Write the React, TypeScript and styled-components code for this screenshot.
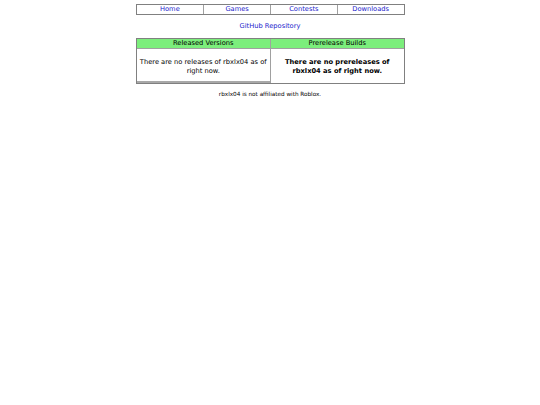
import React from 'react'
import styled, { createGlobalStyle } from 'styled-components'

const GlobalStyle = createGlobalStyle`
  body {
    margin: 4px 0 0 0;
    background: #fff;
    font-family: 'DejaVu Sans', Verdana, sans-serif;
    font-size: 6.7px;
    color: #000;
  }
`

const Page = styled.div`
  display: flex;
  flex-direction: column;
  align-items: center;
`

const Table = styled.table`
  width: 269px;
  border: 1px solid #808080;
  border-collapse: separate;
  border-spacing: 0;
  table-layout: fixed;
`

const NavCell = styled.td`
  border-left: 1px solid #a0a0a0;
  text-align: center;
  padding: 0;
  height: 9px;
  line-height: 9px;
  &:first-child {
    border-left: none;
  }
`

const Link = styled.a`
  color: #2222cc;
  text-decoration: none;
`

const RepoLink = styled(Link)`
  margin-top: 7px;
  line-height: 9px;
`

const MainTable = styled(Table)`
  margin-top: 7px;
`

const HeadCell = styled.th`
  background: #7cee7c;
  font-weight: normal;
  height: 9px;
  line-height: 9px;
  padding: 0;
  border-bottom: 1px solid #a0a0a0;
  & + & {
    border-left: 1px solid #a0a0a0;
  }
`

const BodyCell = styled.td<{ $bold?: boolean }>`
  vertical-align: top;
  text-align: center;
  padding: 0;
  font-weight: ${p => (p.$bold ? 'bold' : 'normal')};
  & + & {
    border-left: 1px solid #a0a0a0;
  }
`

const Message = styled.div`
  padding: 9px 1px 0;
  line-height: 9px;
`

const Strip = styled.div`
  margin-top: 5px;
  height: 2px;
  background: #a8a8a8;
`

const Footer = styled.div`
  margin-top: 6px;
  line-height: 8px;
  font-size: 5.7px;
`

const App: React.FC = () => {
  return (
    <>
      <GlobalStyle />
      <Page>
        <Table>
          <tbody>
            <tr>
              <NavCell><Link href="#">Home</Link></NavCell>
              <NavCell><Link href="#">Games</Link></NavCell>
              <NavCell><Link href="#">Contests</Link></NavCell>
              <NavCell><Link href="#">Downloads</Link></NavCell>
            </tr>
          </tbody>
        </Table>
        <RepoLink href="#">GitHub Repository</RepoLink>
        <MainTable>
          <thead>
            <tr>
              <HeadCell>Released Versions</HeadCell>
              <HeadCell>Prerelease Builds</HeadCell>
            </tr>
          </thead>
          <tbody>
            <tr>
              <BodyCell>
                <Message>There are no releases of rbxlx04 as of right now.</Message>
                <Strip />
              </BodyCell>
              <BodyCell $bold>
                <Message>There are no prereleases of rbxlx04 as of right now.</Message>
              </BodyCell>
            </tr>
          </tbody>
        </MainTable>
        <Footer>rbxlx04 is not affiliated with Roblox.</Footer>
      </Page>
    </>
  )
}

export default App
